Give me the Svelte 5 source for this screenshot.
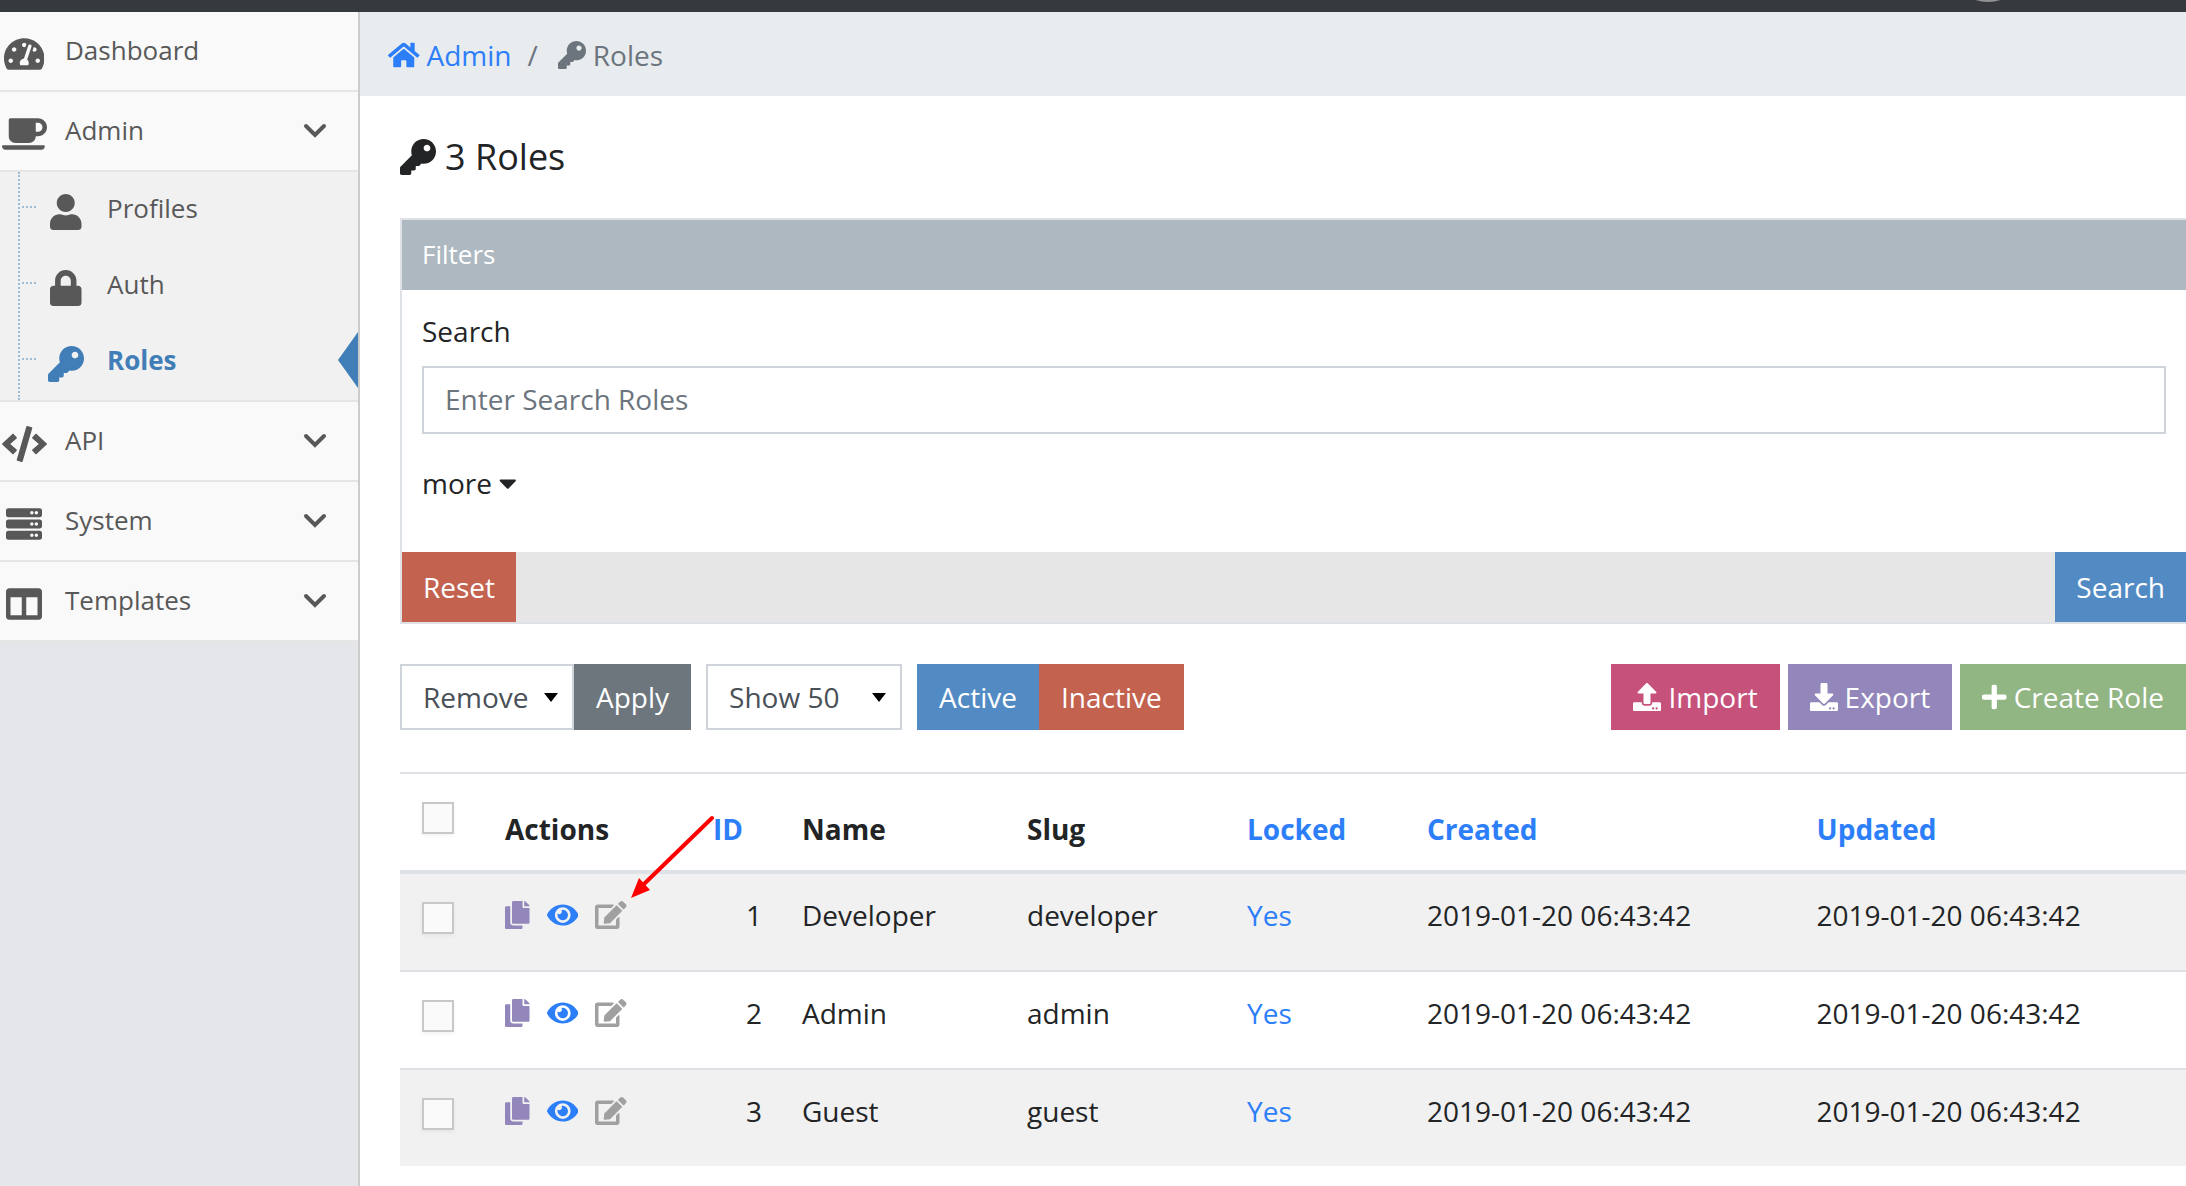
<script lang="ts">
  type Icon = { w: number; d: string };

  const icons: Record<string, Icon> = {
    tachometer: {
      w: 576,
      d: 'M288 32C128.94 32 0 160.94 0 320c0 52.8 14.25 102.26 39.06 144.8 5.61 9.62 16.3 15.2 27.44 15.2h443c11.14 0 21.83-5.58 27.44-15.2C561.75 422.26 576 372.8 576 320c0-159.06-128.94-288-288-288zm0 64c14.71 0 26.58 10.13 30.32 23.65-1.11 2.26-2.64 4.23-3.45 6.67l-9.22 27.67c-5.13 3.49-10.97 6.01-17.64 6.01-17.67 0-32-14.33-32-32S270.33 96 288 96zM96 384c-17.67 0-32-14.33-32-32s14.33-32 32-32 32 14.33 32 32-14.33 32-32 32zm48-160c-17.67 0-32-14.33-32-32s14.33-32 32-32 32 14.33 32 32-14.33 32-32 32zm246.77-72.41l-61.33 184C343.13 347.33 352 364.54 352 384c0 11.72-3.38 22.55-8.88 32H232.88c-5.5-9.45-8.88-20.28-8.88-32 0-33.94 26.5-61.43 59.9-63.59l61.34-184.01c4.17-12.56 17.73-19.45 30.36-15.17 12.57 4.19 19.35 17.79 15.17 30.36zm14.66 57.2l15.52-46.55c3.47-1.29 7.13-2.23 11.05-2.23 17.67 0 32 14.33 32 32s-14.33 32-32 32c-11.38-.01-20.89-6.28-26.57-15.22zM480 384c-17.67 0-32-14.33-32-32s14.33-32 32-32 32 14.33 32 32-14.33 32-32 32z'
    },
    coffee: {
      w: 640,
      d: 'M192 384h192c53 0 96-43 96-96h32c70.6 0 128-57.4 128-128S582.6 32 512 32H120c-13.3 0-24 10.7-24 24v232c0 53 43 96 96 96zM512 96c35.3 0 64 28.7 64 64s-28.7 64-64 64h-32V96h32zm47.7 384H48.3c-47.6 0-61-64-36-64h583.3c25 0 11.8 64-35.9 64z'
    },
    user: {
      w: 448,
      d: 'M224 256c70.7 0 128-57.3 128-128S294.7 0 224 0 96 57.3 96 128s57.3 128 128 128zm89.6 32h-16.7c-22.2 10.2-46.9 16-72.9 16s-50.6-5.8-72.9-16h-16.7C60.2 288 0 348.2 0 422.4V464c0 26.5 21.5 48 48 48h352c26.5 0 48-21.5 48-48v-41.6c0-74.2-60.2-134.4-134.4-134.4z'
    },
    lock: {
      w: 448,
      d: 'M400 224h-24v-72C376 68.2 307.8 0 224 0S72 68.2 72 152v72H48c-26.5 0-48 21.5-48 48v192c0 26.5 21.5 48 48 48h352c26.5 0 48-21.5 48-48V272c0-26.5-21.5-48-48-48zm-104 0H152v-72c0-39.7 32.3-72 72-72s72 32.3 72 72v72z'
    },
    key: {
      w: 512,
      d: 'M512 176.001C512 273.203 433.202 352 336 352c-11.22 0-22.19-1.062-32.827-3.069l-24.012 27.014A23.999 23.999 0 0 1 261.223 384H224v40c0 13.255-10.745 24-24 24h-40v40c0 13.255-10.745 24-24 24H24c-13.255 0-24-10.745-24-24v-78.059c0-6.365 2.529-12.47 7.029-16.971l161.802-161.802C163.108 213.814 160 195.271 160 176 160 78.798 238.797.001 335.999 0 433.488-.001 512 78.511 512 176.001zM336 128c0 26.51 21.49 48 48 48s48-21.49 48-48-21.49-48-48-48-48 21.49-48 48z'
    },
    code: {
      w: 640,
      d: 'M278.9 511.5l-61-17.7c-6.4-1.8-10-8.5-8.2-14.9L346.2 8.7c1.8-6.4 8.5-10 14.9-8.2l61 17.7c6.4 1.8 10 8.5 8.2 14.9L293.8 503.3c-1.9 6.4-8.5 10.1-14.9 8.2zm-114-112.2l43.5-46.4c4.6-4.9 4.3-12.7-.8-17.2L117 256l90.6-79.7c5.1-4.5 5.5-12.3.8-17.2l-43.5-46.4c-4.5-4.8-12.1-5.1-17-.5L3.8 247.2c-5.1 4.7-5.1 12.8 0 17.5l144.1 135.1c4.9 4.6 12.5 4.4 17-.5zm327.2.6l144.1-135.1c5.1-4.7 5.1-12.8 0-17.5L492.1 112.1c-4.8-4.5-12.4-4.3-17 .5L431.6 159c-4.6 4.9-4.3 12.7.8 17.2L523 256l-90.6 79.7c-5.1 4.5-5.5 12.3-.8 17.2l43.5 46.4c4.5 4.9 12.1 5.1 17 .6z'
    },
    server: {
      w: 512,
      d: [32, 192, 352]
        .map(
          (y) =>
            `M480 ${y + 128}H32c-17.673 0-32-14.327-32-32V${y + 32}c0-17.673 14.327-32 32-32h448c17.673 0 32 14.327 32 32v64c0 17.673-14.327 32-32 32zm-48-88c-13.255 0-24 10.745-24 24s10.745 24 24 24 24-10.745 24-24-10.745-24-24-24zm-64 0c-13.255 0-24 10.745-24 24s10.745 24 24 24 24-10.745 24-24-10.745-24-24-24z`
        )
        .join('')
    },
    columns: {
      w: 512,
      d: 'M464 32H48C21.49 32 0 53.49 0 80v352c0 26.51 21.49 48 48 48h416c26.51 0 48-21.49 48-48V80c0-26.51-21.49-48-48-48zM224 416H64V160h160v256zm224 0H288V160h160v256z'
    },
    home: {
      w: 576,
      d: 'M280.37 148.26L96 300.11V464a16 16 0 0 0 16 16l112.06-.29a16 16 0 0 0 15.92-16V368a16 16 0 0 1 16-16h64a16 16 0 0 1 16 16v95.64a16 16 0 0 0 16 16.05L464 480a16 16 0 0 0 16-16V300L295.67 148.26a12.19 12.19 0 0 0-15.3 0zM571.6 251.47L488 182.56V44.05a12 12 0 0 0-12-12h-56a12 12 0 0 0-12 12v72.61L318.47 43a48 48 0 0 0-61 0L4.34 251.47a12 12 0 0 0-1.6 16.9l25.5 31A12 12 0 0 0 45.15 301l235.22-193.74a12.19 12.19 0 0 1 15.3 0L530.9 301a12 12 0 0 0 16.9-1.6l25.5-31a12 12 0 0 0-1.7-16.93z'
    },
    upload: {
      w: 512,
      d: 'M296 384h-80c-13.3 0-24-10.7-24-24V192h-87.7c-17.8 0-26.7-21.5-14.1-34.1L242.3 5.7c7.5-7.5 19.8-7.5 27.3 0l152.2 152.2c12.6 12.6 3.7 34.1-14.1 34.1H320v168c0 13.3-10.7 24-24 24zm216-8v112c0 13.3-10.7 24-24 24H24c-13.3 0-24-10.7-24-24V376c0-13.3 10.7-24 24-24h136v8c0 30.9 25.1 56 56 56h80c30.9 0 56-25.1 56-56v-8h136c13.3 0 24 10.7 24 24zm-124 88c0-11-9-20-20-20s-20 9-20 20 9 20 20 20 20-9 20-20zm64 0c0-11-9-20-20-20s-20 9-20 20 9 20 20 20 20-9 20-20z'
    },
    download: {
      w: 512,
      d: 'M216 0h80c13.3 0 24 10.7 24 24v168h87.7c17.8 0 26.7 21.5 14.1 34.1L269.7 378.3c-7.5 7.5-19.8 7.5-27.3 0L90.1 226.1c-12.6-12.6-3.7-34.1 14.1-34.1H192V24c0-13.3 10.7-24 24-24zm296 376v112c0 13.3-10.7 24-24 24H24c-13.3 0-24-10.7-24-24V376c0-13.3 10.7-24 24-24h146.7l49 49c20.1 20.1 52.5 20.1 72.6 0l49-49H488c13.3 0 24 10.7 24 24zm-124 88c0-11-9-20-20-20s-20 9-20 20 9 20 20 20 20-9 20-20zm64 0c0-11-9-20-20-20s-20 9-20 20 9 20 20 20 20-9 20-20z'
    },
    plus: {
      w: 448,
      d: 'M416 208H272V64c0-17.67-14.33-32-32-32h-32c-17.67 0-32 14.33-32 32v144H32c-17.67 0-32 14.33-32 32v32c0 17.67 14.33 32 32 32h144v144c0 17.67 14.33 32 32 32h32c17.67 0 32-14.33 32-32V304h144c17.67 0 32-14.33 32-32v-32c0-17.67-14.33-32-32-32z'
    },
    copy: {
      w: 448,
      d: 'M320 448v40c0 13.255-10.745 24-24 24H24c-13.255 0-24-10.745-24-24V120c0-13.255 10.745-24 24-24h72v296c0 30.879 25.121 56 56 56h168zm0-344V0H152c-13.255 0-24 10.745-24 24v368c0 13.255 10.745 24 24 24h272c13.255 0 24-10.745 24-24V128H344c-13.2 0-24-10.8-24-24zm120.971-31.029L375.029 7.029A24 24 0 0 0 358.059 0H352v96h96v-6.059a24 24 0 0 0-7.029-16.97z'
    },
    eye: {
      w: 576,
      d: 'M572.52 241.4C518.29 135.59 410.93 64 288 64S57.68 135.64 3.48 241.41a32.35 32.35 0 0 0 0 29.19C57.71 376.41 165.07 448 288 448s230.32-71.64 284.52-177.41a32.35 32.35 0 0 0 0-29.19zM288 400a144 144 0 1 1 144-144 143.93 143.93 0 0 1-144 144zm0-240a95.31 95.31 0 0 0-25.31 3.79 47.85 47.85 0 0 1-66.9 66.9A95.78 95.78 0 1 0 288 160z'
    },
    edit: {
      w: 576,
      d: 'M402.6 83.2l90.2 90.2c3.8 3.8 3.8 10 0 13.8L274.4 405.6l-92.8 10.3c-12.4 1.4-22.9-9.1-21.5-21.5l10.3-92.8L388.8 83.2c3.8-3.8 10-3.8 13.8 0zm162-22.9l-48.8-48.8c-15.2-15.2-39.9-15.2-55.2 0l-35.4 35.4c-3.8 3.8-3.8 10 0 13.8l90.2 90.2c3.8 3.8 10 3.8 13.8 0l35.4-35.4c15.2-15.3 15.2-40 0-55.2zM384 346.2V448H64V128h229.8c3.2 0 6.2-1.3 8.5-3.5l40-40c7.6-7.6 2.2-20.5-8.5-20.5H48C21.5 64 0 85.5 0 112v352c0 26.5 21.5 48 48 48h352c26.5 0 48-21.5 48-48V306.2c0-10.7-12.9-16-20.5-8.5l-40 40c-2.2 2.3-3.5 5.3-3.5 8.5z'
    },
    caret: {
      w: 320,
      d: 'M31.3 192h257.3c17.8 0 26.7 21.5 14.1 34.1L174.1 354.8c-7.8 7.8-20.5 7.8-28.3 0L17.2 226.1C4.6 213.5 13.5 192 31.3 192z'
    }
  };

  const menu = [
    { label: 'Dashboard', icon: 'tachometer', expandable: false, children: [] },
    {
      label: 'Admin',
      icon: 'coffee',
      expandable: true,
      children: [
        { label: 'Profiles', icon: 'user', active: false },
        { label: 'Auth', icon: 'lock', active: false },
        { label: 'Roles', icon: 'key', active: true }
      ]
    },
    { label: 'API', icon: 'code', expandable: true, children: [] },
    { label: 'System', icon: 'server', expandable: true, children: [] },
    { label: 'Templates', icon: 'columns', expandable: true, children: [] }
  ];

  const roles = [
    { id: 1, name: 'Developer', slug: 'developer' },
    { id: 2, name: 'Admin', slug: 'admin' },
    { id: 3, name: 'Guest', slug: 'guest' }
  ];
  const stamp = '2019-01-20 06:43:42';
</script>

{#snippet icon(name: string, large = false)}
  <svg class="icon" class:large viewBox="0 0 {icons[name].w} 512" aria-hidden="true">
    <path d={icons[name].d} />
  </svg>
{/snippet}

{#snippet arrowDown()}
  <svg class="select-arrow" viewBox="0 0 14 9" aria-hidden="true"><path d="M0 0h14L7 9z" /></svg>
{/snippet}

<div class="app">
  <header class="topbar"><span class="avatar"></span></header>

  <div class="layout">
    <nav class="sidebar" aria-label="Main">
      <ul class="menu">
        {#each menu as item}
          <li class="menu-item">
            <a class="menu-link" href="#{item.label}">
              <span class="menu-icon">{@render icon(item.icon, true)}</span>
              <span class="menu-text">{item.label}</span>
              {#if item.expandable}
                <svg class="chevron" viewBox="0 0 24 16" aria-hidden="true">
                  <path d="M3 3l9 9 9-9" />
                </svg>
              {/if}
            </a>
            {#if item.children.length}
              <ul class="submenu">
                {#each item.children as child}
                  <li class="sub-item" class:active={child.active}>
                    <a class="sub-link" href="#{child.label}">
                      <span class="menu-icon">{@render icon(child.icon, true)}</span>
                      <span class="menu-text">{child.label}</span>
                    </a>
                  </li>
                {/each}
              </ul>
            {/if}
          </li>
        {/each}
      </ul>
    </nav>

    <main class="main">
      <nav class="breadcrumb" aria-label="Breadcrumb">
        <a class="crumb" href="#admin">{@render icon('home')}Admin</a>
        <span class="slash">/</span>
        <span class="crumb">{@render icon('key')}Roles</span>
      </nav>

      <div class="content">
        <h1>{@render icon('key', true)}3 Roles</h1>

        <form class="card">
          <div class="card-header">Filters</div>
          <div class="card-body">
            <label for="search">Search</label>
            <input id="search" class="search" type="text" placeholder="Enter Search Roles" />
            <button type="button" class="more">more {@render icon('caret')}</button>
          </div>
          <div class="card-footer">
            <button type="reset" class="btn red">Reset</button>
            <button type="button" class="btn blue">Search</button>
          </div>
        </form>

        <div class="toolbar">
          <div class="group">
            <div class="select action">
              <select aria-label="Bulk action"><option>Remove</option></select>
              {@render arrowDown()}
            </div>
            <button type="button" class="btn gray">Apply</button>
          </div>
          <div class="select count">
            <select aria-label="Rows shown"><option>Show 50</option></select>
            {@render arrowDown()}
          </div>
          <div class="group">
            <button type="button" class="btn blue">Active</button>
            <button type="button" class="btn red">Inactive</button>
          </div>
          <div class="tools">
            <button type="button" class="btn pink">{@render icon('upload')}Import</button>
            <button type="button" class="btn purple">{@render icon('download')}Export</button>
            <button type="button" class="btn green">{@render icon('plus')}Create Role</button>
          </div>
        </div>

        <table>
          <colgroup>
            <col class="c-check" /><col class="c-actions" /><col class="c-id" /><col class="c-name" />
            <col class="c-slug" /><col class="c-locked" /><col class="c-date" /><col class="c-date" />
          </colgroup>
          <thead>
            <tr>
              <th class="check"><input type="checkbox" aria-label="Select all roles" /></th>
              <th>Actions</th>
              <th><a href="#id">ID</a></th>
              <th>Name</th>
              <th>Slug</th>
              <th><a href="#locked">Locked</a></th>
              <th><a href="#created">Created</a></th>
              <th><a href="#updated">Updated</a></th>
            </tr>
          </thead>
          <tbody>
            {#each roles as role, i}
              <tr>
                <td class="check"><input type="checkbox" aria-label="Select {role.name}" /></td>
                <td>
                  <div class="actions">
                    <a class="copy" href="#copy" aria-label="Copy {role.name}">{@render icon('copy')}</a>
                    <a href="#view" aria-label="View {role.name}">{@render icon('eye')}</a>
                    <a class="edit" href="#edit" aria-label="Edit {role.name}">
                      {@render icon('edit')}
                      {#if i === 0}
                        <svg class="pointer" viewBox="0 0 86 84" aria-hidden="true">
                          <path class="shaft" d="M83 3L14 70" />
                          <path class="head" d="M2 83L10 63 21 75z" />
                        </svg>
                      {/if}
                    </a>
                  </div>
                </td>
                <td class="id">{role.id}</td>
                <td>{role.name}</td>
                <td>{role.slug}</td>
                <td><a href="#locked-{role.id}">Yes</a></td>
                <td>{stamp}</td>
                <td>{stamp}</td>
              </tr>
            {/each}
          </tbody>
        </table>
      </div>
    </main>
  </div>
</div>

<style>
  :global(body) {
    margin: 0;
    background: #fff;
  }

  .app {
    display: flex;
    flex-direction: column;
    min-height: 100vh;
    overflow-x: hidden;
    font: 28px/42px 'Open Sans', 'Noto Sans', sans-serif;
    color: #222426;
  }

  .app :global(*) {
    box-sizing: border-box;
  }

  a {
    color: #2d7ff9;
    text-decoration: none;
  }

  button,
  input,
  select {
    margin: 0;
    font: inherit;
    border-radius: 0;
  }

  ul {
    margin: 0;
    padding: 0;
    list-style: none;
  }

  .icon {
    display: block;
    flex: none;
    height: 28px;
    fill: currentColor;
  }

  .icon.large {
    height: 36px;
  }

  /* Top bar */
  .topbar {
    position: relative;
    height: 12px;
    overflow: hidden;
    background: #363a3e;
  }

  .avatar {
    position: absolute;
    right: 158px;
    bottom: 10px;
    width: 80px;
    height: 80px;
    border-radius: 50%;
    background: #929292;
  }

  .layout {
    display: flex;
    flex: 1;
  }

  /* Sidebar */
  .sidebar {
    flex: none;
    width: 360px;
    border-right: 2px solid #ccc;
    background: #e4e6e9;
    font-size: 26px;
  }

  .menu-item {
    border-bottom: 2px solid #e5e5e5;
  }

  .menu-link,
  .sub-link {
    display: flex;
    align-items: center;
    color: #585858;
  }

  .menu-link {
    height: 78px;
    padding-right: 31px;
    background: #f9f9f9;
  }

  .menu-icon {
    display: flex;
    justify-content: center;
    width: 48px;
    margin-right: 17px;
    padding-top: 6px;
  }

  .menu-text {
    flex: 1;
    padding-bottom: 2px;
  }

  .chevron {
    width: 24px;
    height: 16px;
    fill: none;
    stroke: #585858;
    stroke-width: 4;
    stroke-linecap: round;
  }

  .submenu {
    position: relative;
    border-top: 2px solid #e5e5e5;
    background: #f1f1f1;
  }

  .submenu::before {
    content: '';
    position: absolute;
    top: 0;
    bottom: 0;
    left: 18px;
    border-left: 2px dotted #9dbdd6;
  }

  .sub-item {
    position: relative;
  }

  .sub-item::before {
    content: '';
    position: absolute;
    top: 34px;
    left: 22px;
    width: 14px;
    border-top: 2px dotted #9dbdd6;
  }

  .sub-link {
    height: 76px;
    padding-left: 42px;
  }

  .sub-link .menu-icon {
    padding-top: 4px;
  }

  .sub-link .menu-text {
    padding-bottom: 4px;
  }

  .active .sub-link {
    color: #417eb8;
    font-weight: 700;
  }

  .active::after {
    content: '';
    position: absolute;
    top: 8px;
    right: 0;
    width: 20px;
    height: 56px;
    background: #417eb8;
    clip-path: polygon(100% 0, 100% 100%, 0 50%);
  }

  /* Main column */
  .main {
    flex: 1;
    min-width: 0;
  }

  .breadcrumb {
    display: flex;
    align-items: center;
    gap: 16px;
    height: 84px;
    padding: 2px 28px 0;
    background: #e8ecef;
    color: #6c757d;
  }

  .crumb {
    display: flex;
    align-items: center;
    gap: 7px;
  }

  .slash {
    margin-right: 4px;
  }

  .content {
    padding-left: 40px;
  }

  h1 {
    display: flex;
    align-items: center;
    gap: 9px;
    margin: 39px 0;
    font-size: 36px;
    line-height: 44px;
    font-weight: 400;
  }

  /* Filter card */
  .card {
    border: 2px solid #dee2e6;
    border-right: 0;
  }

  .card-header {
    padding: 13px 20px 15px;
    background: #adb8c0;
    color: #fff;
    font-size: 26px;
  }

  .card-body {
    padding: 20px 20px 48px;
  }

  .card-body label {
    display: block;
    margin-bottom: 14px;
  }

  .search {
    display: block;
    width: 100%;
    height: 68px;
    padding: 0 21px 2px;
    border: 2px solid #ced4da;
    background: #fff;
    color: #495057;
  }

  .search::placeholder {
    color: #6c757d;
    opacity: 1;
  }

  .more {
    display: flex;
    align-items: center;
    gap: 7px;
    margin-top: 28px;
    padding: 0;
    border: 0;
    background: none;
    color: inherit;
  }

  .card-footer {
    display: flex;
    justify-content: space-between;
    background: #e6e6e6;
  }

  .card-footer .btn {
    height: 70px;
    padding: 0 21px;
  }

  .btn {
    display: flex;
    align-items: center;
    gap: 7px;
    height: 66px;
    padding: 0 22px;
    border: 0;
    color: #fff;
    white-space: nowrap;
  }

  .red { background: #c3624f; }
  .blue { background: #528bc4; }
  .gray { background: #6d757d; }
  .pink { background: #c6527c; }
  .purple { background: #9286ba; }
  .green { background: #92b584; }

  /* Toolbar */
  .toolbar {
    display: flex;
    gap: 15px;
    margin: 40px 0 42px;
  }

  .group {
    display: flex;
  }

  .tools {
    display: flex;
    gap: 8px;
    margin-left: auto;
  }

  .select {
    position: relative;
  }

  .select select {
    width: 100%;
    height: 66px;
    padding: 0 21px;
    appearance: none;
    border: 2px solid #ced4da;
    background: #fff;
    color: #495057;
  }

  .action { width: 174px; }
  .count { width: 196px; }

  .select-arrow {
    position: absolute;
    top: 29px;
    right: 16px;
    width: 14px;
    height: 9px;
    pointer-events: none;
  }

  /* Roles table */
  table {
    width: 100%;
    table-layout: fixed;
    border-collapse: separate;
    border-spacing: 0;
  }

  .c-check { width: 85px; }
  .c-actions { width: 208px; }
  .c-id { width: 89px; }
  .c-name { width: 225px; }
  .c-slug { width: 220px; }
  .c-locked { width: 180px; }

  th,
  td {
    height: 98px;
    padding: 20px;
    border-top: 2px solid #dee2e6;
    text-align: left;
    vertical-align: top;
  }

  th {
    height: 102px;
    border-bottom: 4px solid #dee2e6;
    font-weight: 700;
    vertical-align: bottom;
  }

  th.check {
    vertical-align: top;
  }

  tbody tr:first-child td {
    height: 96px;
    border-top: 0;
  }

  tbody tr:nth-child(odd) td {
    background: #f1f1f1;
  }

  .check {
    padding: 28px 22px;
    line-height: 0;
  }

  .check input {
    width: 32px;
    height: 32px;
    appearance: none;
    border: 2px solid #c8c8c8;
    background: #fafafa;
    box-shadow: 0 2px 4px rgba(0, 0, 0, 0.05);
  }

  .id {
    text-align: right;
  }

  .actions {
    display: flex;
    align-items: center;
    gap: 17px;
    height: 42px;
  }

  .copy { color: #9286ba; }

  .edit {
    position: relative;
    color: #a0a0a0;
  }

  .pointer {
    position: absolute;
    left: 34px;
    bottom: 30px;
    width: 86px;
    height: 84px;
    pointer-events: none;
  }

  .shaft {
    fill: none;
    stroke: #f00;
    stroke-width: 4;
    stroke-linecap: round;
  }

  .head {
    fill: #f00;
  }
</style>
